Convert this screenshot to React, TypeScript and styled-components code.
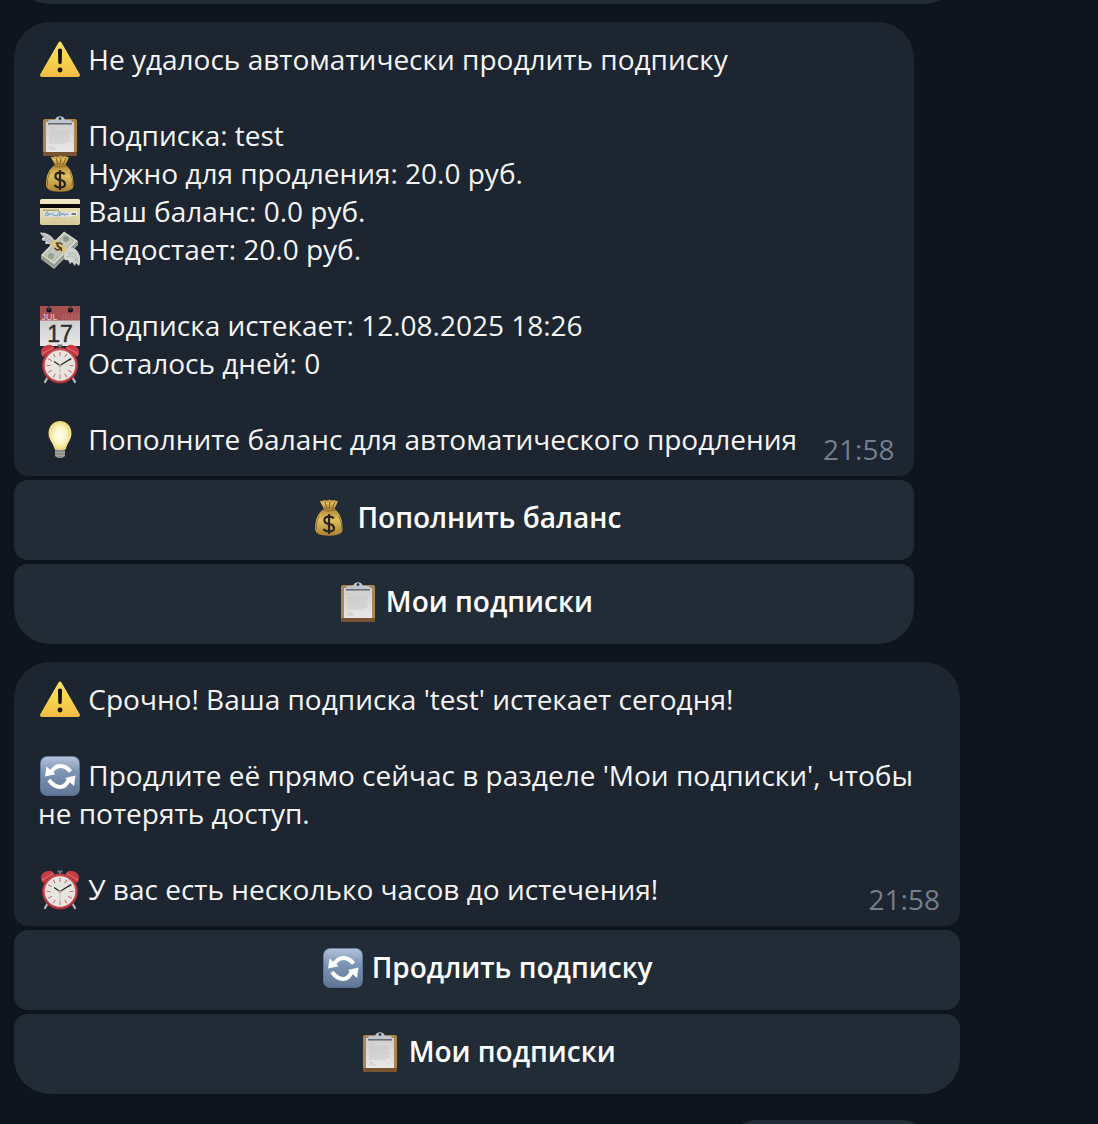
import React from "react";
import styled, { createGlobalStyle } from "styled-components";

const GlobalStyle = createGlobalStyle`
  *, *::before, *::after { box-sizing: border-box; }
  body {
    margin: 0;
    background: #0e151e;
    color: #f5f5f5;
    font-family: "Open Sans", "Noto Sans", sans-serif;
    font-size: 28px;
    line-height: 38px;
  }
`;

const Chat = styled.main`
  display: flex;
  flex-direction: column;
  align-items: flex-start;
  gap: 18px;
  height: 100vh;
  padding: 0 14px;
  overflow: hidden;
`;

const PreviousEdge = styled.div`
  display: flex;
  align-items: flex-end;
  flex: none;
  width: 100%;
  max-width: 946px;
  height: 4px;
  overflow: hidden;
`;

const PreviousKey = styled.div`
  flex: 1 0 auto;
  height: 80px;
  border-radius: 14px 14px 36px 36px;
  background: #212c37;
`;

const NextEdge = styled.div`
  display: flex;
  justify-content: flex-end;
  align-self: stretch;
  flex: 1 0 0;
  margin-top: 8px;
  padding-right: 158px;
  overflow: hidden;
`;

const NextPill = styled.div`
  flex: none;
  width: 194px;
  height: 48px;
  border-radius: 24px;
  background: #212c37;
`;

const Message = styled.article`
  display: flex;
  flex-direction: column;
  flex: none;
  gap: 4px;
  width: fit-content;
  max-width: min(946px, 100%);
`;

const Bubble = styled.div`
  padding: 18px 20px 8px 24px;
  border-radius: 36px 36px 14px 14px;
  background: #1c2530;
`;

const Line = styled.p`
  min-height: 38px;
  margin: 0;
`;

const LastRow = styled.div`
  display: flex;
  justify-content: space-between;
  align-items: flex-end;
  gap: 26px;
`;

const LastLine = styled(Line)`
  padding-bottom: 10px;
`;

const Time = styled.time`
  color: #737f8c;
`;

const Key = styled.button`
  padding: 18px 24px 24px;
  border: 0;
  border-radius: 14px;
  background: #212c37;
  color: #ffffff;
  font: inherit;
  font-weight: 600;
  cursor: pointer;

  &:last-child {
    border-radius: 14px 14px 36px 36px;
  }
`;

const Glyph = styled.svg`
  display: inline-block;
  width: 40px;
  height: 40px;
  margin: 0 1px -2px 2px;
  vertical-align: top;
`;

type IconName =
  | "warning"
  | "clipboard"
  | "bag"
  | "card"
  | "wings"
  | "calendar"
  | "clock"
  | "bulb"
  | "refresh";

const ticks = [0, 30, 60, 90, 120, 150, 180, 210, 240, 270, 300, 330];

const drawings: Record<IconName, React.ReactNode> = {
  warning: (
    <>
      <path d="M18.4 2.800Q20 .4 21.600 2.800L39.600 34Q40.800 37 38 37H2Q-.8 37 .4 34Z" fill="url(#g-warn)" />
      <path d="M17.900 10.200Q17.800 8.600 20 8.600T22.100 10.200L21.700 22.800Q21.500 24.200 20 24.200T18.300 22.800Z" fill="#15130d" />
      <circle cx="20" cy="30" r="2.400" fill="#15130d" />
    </>
  ),
  clipboard: (
    <>
      <rect x="3" y="3" width="34" height="37" rx="2" fill="#ab8552" />
      <path d="M3 36h34v2q0 2-2 2H5q-2 0-2-2Z" fill="#785330" />
      <rect x="6" y="6" width="28" height="30" fill="url(#g-paper)" />
      <path d="M9 12h5M9 15h20M9 17h21M9 19h19M9 21h21M9 23h20M9 25h21M9 27h16M9 31h5M9 33h7" stroke="#c3c3c4" strokeWidth=".8" />
      <path d="M8 7.200V5.500Q8.300 4 10 4H15Q16 .2 20 .2T25 4H30Q31.700 4 32 5.500V7.200Z" fill="#bdc6d0" />
      <path d="M8 7.800H32" stroke="#686866" strokeWidth="1.500" />
      <circle cx="20" cy="2.600" r="1.400" fill="#26313d" />
    </>
  ),
  bag: (
    <>
      <path d="M10.500 2.500Q13 3.500 15 2Q18 3 20 1.500Q23 3 25 1.800Q27 3.300 29 3L25.500 11H15Z" fill="url(#g-gold)" />
      <path d="M16 4l2 7M21 4l-1 7M26 4l-3 7" stroke="#80602a" strokeWidth="1" />
      <path d="M14.800 11H25.500C30 14.500 33.500 19 33.500 31.500Q33.500 37.500 20 37.700T6 31.500C6 19 10 14.500 14.800 11Z" fill="url(#g-gold)" />
      <path d="M10 18Q6 26 7.500 32M30 18Q34 26 32 32M14 12Q18 14 26 12" fill="none" stroke="#8f6c25" strokeWidth="1" />
      <path d="M24.700 20.400Q23.500 18.600 20 18.600Q15.400 18.600 15.400 22T20 26T25 30T20 33.500Q16 33.500 14.500 31M20 16V36" fill="none" stroke="#29251c" strokeWidth="2.200" />
    </>
  ),
  card: (
    <>
      <rect y="7" width="40" height="26" rx="1.800" fill="url(#g-card)" />
      <path d="M0 12h40v4H0Z" fill="#080808" />
      <path d="M3 18.200h16" stroke="#807b60" strokeWidth=".8" />
      <path d="M3 20h27v5H3Z" fill="#d3dde4" />
      <path d="M30 20h7v4h-7Z" fill="#f0efe8" />
      <path d="M31.500 22h4.500" stroke="#24262a" strokeWidth="1.200" />
      <path d="M5 24Q7 18 8 21T7 24Q10 20 10.500 23Q12 20 13 23L17 24Q20 17 20 21T19 24Q22 20 22 23Q24 19 24 23L28 22" fill="none" stroke="#6288ad" strokeWidth=".8" />
      <path d="M12 27h25M12 30h25" stroke="#c8c19c" strokeWidth="1.200" strokeDasharray="2 1" />
    </>
  ),
  wings: (
    <>
      <path d="M15 11Q10 2 0 2.500Q1 6 4 7Q1 8 2 10.500L6 11Q4 13 6 14L10 14Q9 17 12 16.500L16 15Z" fill="#c8c9c8" />
      <path d="M2 4L13 12M5 9L13 14" stroke="#9a9fa2" strokeWidth=".8" />
      <path d="M1 25L24 1.500L38 11L14 34.500Z" fill="#d5d6cc" />
      <path d="M1 25L14 34.500L38 11V15L14 39L1 29Z" fill="#a6aaa2" />
      <path d="M1 27L14 36.500L38 13" fill="none" stroke="#7b8079" strokeWidth=".8" />
      <path d="M4.500 25L24.500 4.500L34 11L14 31Z" fill="#c2c5bc" stroke="#98a092" strokeWidth=".7" />
      <circle cx="26" cy="9" r="3" fill="#8f9989" />
      <circle cx="11" cy="26" r="3" fill="#98a192" />
      <path d="M15 9.500L28 19V26L24 29V24L10 14.500Z" fill="#cfa652" />
      <path d="M10 14.500L24 24L28 19L15 9.500Z" fill="#dfc57c" />
      <path d="M22.500 14.500Q19 11.500 17.500 14T20 17.500T17 20L14.500 18M16 12.500L22 21" fill="none" stroke="#4b3f23" strokeWidth="1.500" />
      <path d="M24 23Q27 17 33 18Q37 19 39.500 25Q41 31 39 36L36 33L35 36L32 32L30 34L28 30Q24 31 24 28Z" fill="#d2d2d0" />
      <path d="M27 27Q34 23 36 32M28 24Q36 20 38 32" fill="none" stroke="#a4a9ac" strokeWidth=".8" />
    </>
  ),
  calendar: (
    <>
      <path d="M0 14h40v26H0Z" fill="url(#g-paper)" />
      <path d="M0 0h40v14.500H0Z" fill="#a54f50" />
      <circle cx="9" cy="4" r="2.500" fill="#121317" />
      <circle cx="30.500" cy="4" r="2.500" fill="#121317" />
      <path d="M9 0v4M30.500 0v4" stroke="#41464d" strokeWidth="1.600" />
      <path d="M23 8v6M26 7v7M29 9v5M32 7v7M35 9v5M38 7v7" stroke="#bb7475" strokeWidth=".8" />
      <text x="1.500" y="13.500" fill="#e2cccc" fontFamily="Liberation Sans" fontSize="9">JUL</text>
      <text x="20" y="35.500" textAnchor="middle" fill="#303030" stroke="#303030" strokeWidth=".5" fontFamily="Liberation Sans" fontSize="23">17</text>
    </>
  ),
  clock: (
    <>
      <path d="M8 33L5 38M32 33L35 38" stroke="#b5b9ba" strokeWidth="2.200" strokeLinecap="round" />
      <path d="M17.500 1.500h5M20 1v4" stroke="#70777c" strokeWidth="2" />
      <path d="M1.500 11Q-.5 4 6 1.500T15 6L3 13Z" fill="#c93c44" />
      <path d="M38.500 11Q40.500 4 34 1.500T25 6L37 13Z" fill="#c93c44" />
      <path d="M2 10L14 3M38 10L26 3" stroke="#e0757a" strokeWidth="1" />
      <circle cx="20" cy="21.500" r="18" fill="#a02f35" />
      <circle cx="20" cy="21" r="17" fill="#c4474c" />
      <circle cx="20" cy="21.500" r="15.300" fill="#e6e5e1" />
      {ticks.map((angle) => (
        <path key={angle} d="M20 8v4" stroke="#d06a6e" strokeWidth="1" transform={`rotate(${angle} 20 21.500)`} />
      ))}
      <path d="M20 21.500V34.500" stroke="#c8b995" strokeWidth=".8" />
      <path d="M14 17.500L20 21.500L31 14.500" fill="none" stroke="#292929" strokeWidth="1.400" />
      <circle cx="20" cy="21.500" r="1.500" fill="#b8a88b" />
    </>
  ),
  bulb: (
    <>
      <path d="M15 28h10v8l-3 2h-4l-3-2Z" fill="#a3a39c" />
      <path d="M15 31h10M15 34h10M17 37h6" stroke="#7b7f80" strokeWidth="1" />
      <path d="M8.500 13.500C8.500 6 13.500 1 20 1S31.500 6 31.500 13.500C31.500 20 26.500 24 26 29Q20 31 14.500 29C14 24 8.500 20 8.500 13.500Z" fill="url(#g-bulb)" />
    </>
  ),
  refresh: (
    <>
      <rect width="40" height="40" rx="7" fill="#536e91" />
      <rect x=".8" y=".8" width="38.400" height="38" rx="6.500" fill="url(#g-blue)" />
      <path d="M11 17Q14 10.200 20 10T30.500 15.500M29 23Q26 31 20 31T9 24" fill="none" stroke="#ffffff" strokeWidth="4" />
      <path d="M6.500 10.500L5 20.500L15.500 18.300ZM25 22L35.500 19.500L34 30Z" fill="#ffffff" />
    </>
  ),
};

const Gradients = styled.svg`
  position: absolute;
  width: 0;
  height: 0;
`;

const gradients = [
  { id: "g-warn", stops: ["#fbe067", "#f9d950", "#f2bb42"] },
  { id: "g-paper", stops: ["#cfcfcf", "#d8d8d8", "#e8e8e8"] },
  { id: "g-gold", stops: ["#b18737", "#e0c05e", "#aa8130"] },
  { id: "g-card", stops: ["#f0eac8", "#e6ddb2", "#d6ca96"] },
  { id: "g-blue", stops: ["#b3c3d8", "#7c95b5", "#637795"] },
];

function IconPaints() {
  return (
    <Gradients aria-hidden="true">
      <defs>
        {gradients.map(({ id, stops }) => (
          <linearGradient key={id} id={id} x1="0" y1="0" x2="0" y2="1">
            <stop offset="0" stopColor={stops[0]} />
            <stop offset=".4" stopColor={stops[1]} />
            <stop offset="1" stopColor={stops[2]} />
          </linearGradient>
        ))}
        <radialGradient id="g-bulb">
          <stop offset="0" stopColor="#fffef4" />
          <stop offset=".6" stopColor="#fbf3bf" />
          <stop offset="1" stopColor="#e9d579" />
        </radialGradient>
      </defs>
    </Gradients>
  );
}

function Icon({ name }: { name: IconName }) {
  return (
    <Glyph viewBox="0 0 40 40" aria-hidden="true">
      {drawings[name]}
    </Glyph>
  );
}

interface Row {
  icon?: IconName;
  text?: string;
}

interface MessageData {
  rows: Row[];
  last: Row;
  time: string;
  keys: { icon: IconName; text: string }[];
}

const messages: MessageData[] = [
  {
    rows: [
      { icon: "warning", text: "Не удалось автоматически продлить подписку" },
      {},
      { icon: "clipboard", text: "Подписка: test" },
      { icon: "bag", text: "Нужно для продления: 20.0 руб." },
      { icon: "card", text: "Ваш баланс: 0.0 руб." },
      { icon: "wings", text: "Недостает: 20.0 руб." },
      {},
      { icon: "calendar", text: "Подписка истекает: 12.08.2025 18:26" },
      { icon: "clock", text: "Осталось дней: 0" },
      {},
    ],
    last: { icon: "bulb", text: "Пополните баланс для автоматического продления" },
    time: "21:58",
    keys: [
      { icon: "bag", text: "Пополнить баланс" },
      { icon: "clipboard", text: "Мои подписки" },
    ],
  },
  {
    rows: [
      { icon: "warning", text: "Срочно! Ваша подписка 'test' истекает сегодня!" },
      {},
      {
        icon: "refresh",
        text: "Продлите её прямо сейчас в разделе 'Мои подписки', чтобы не потерять доступ.",
      },
      {},
    ],
    last: { icon: "clock", text: "У вас есть несколько часов до истечения!" },
    time: "21:58",
    keys: [
      { icon: "refresh", text: "Продлить подписку" },
      { icon: "clipboard", text: "Мои подписки" },
    ],
  },
];

function Content({ icon, text }: Row) {
  return (
    <>
      {icon && <Icon name={icon} />}
      {text && ` ${text}`}
    </>
  );
}

export default function App() {
  return (
    <>
      <GlobalStyle />
      <IconPaints />
      <Chat>
        <PreviousEdge>
          <PreviousKey />
        </PreviousEdge>
        {messages.map((message, index) => (
          <Message key={index}>
            <Bubble>
              {message.rows.map((row, i) => (
                <Line key={i}>
                  <Content {...row} />
                </Line>
              ))}
              <LastRow>
                <LastLine>
                  <Content {...message.last} />
                </LastLine>
                <Time>{message.time}</Time>
              </LastRow>
            </Bubble>
            {message.keys.map((key) => (
              <Key key={key.text} type="button">
                <Content {...key} />
              </Key>
            ))}
          </Message>
        ))}
        <NextEdge>
          <NextPill />
        </NextEdge>
      </Chat>
    </>
  );
}
